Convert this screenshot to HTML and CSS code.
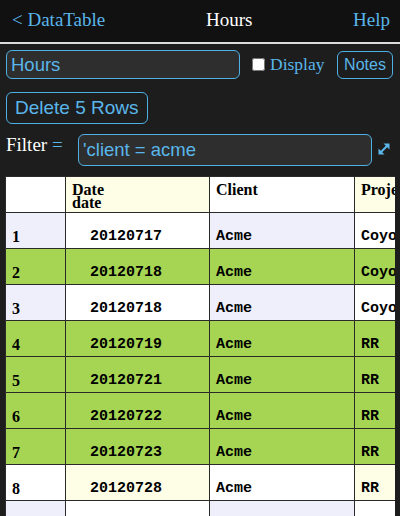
FILE: index.html
```html
<!DOCTYPE html>
<html>
<head>
<meta charset="utf-8">
<link rel="stylesheet" href="styles.css">
</head>
<body>
<header class="topbar">
  <span class="nav-link">&lt; DataTable</span>
  <span class="title">Hours</span>
  <span class="nav-link">Help</span>
</header>
<div class="toolbar">
  <input class="field name-field" type="text" value="Hours">
  <input class="check" type="checkbox">
  <span class="check-label">Display</span>
  <button class="btn notes-btn">Notes</button>
</div>
<div class="actions">
  <button class="btn delete-btn">Delete 5 Rows</button>
</div>
<div class="filter-row">
  <span class="filter-label">Filter <span class="eq">=</span></span>
  <input class="field filter-field" type="text" value="'client = acme">
  <svg class="expand" width="12" height="12" viewBox="0 0 12 12">
    <line x1="3" y1="9" x2="9" y2="3" stroke="#5ab6ea" stroke-width="2"/>
    <polygon points="5.5,0.5 11.5,0.5 11.5,6.5" fill="#5ab6ea"/>
    <polygon points="0.5,5.5 0.5,11.5 6.5,11.5" fill="#5ab6ea"/>
  </svg>
</div>
<div class="table-wrap">
  <table class="grid">
    <colgroup>
      <col class="c1"><col class="c2"><col class="c3"><col class="c4">
    </colgroup>
    <thead>
      <tr class="even">
        <th class="a"></th>
        <th class="b">Date<br>date</th>
        <th class="a">Client</th>
        <th class="b">Project</th>
      </tr>
    </thead>
    <tbody>
      <tr class="odd"><td class="a num">1</td><td class="b date">20120717</td><td class="a mono">Acme</td><td class="b mono">Coyote</td></tr>
      <tr class="sel"><td class="a num">2</td><td class="b date">20120718</td><td class="a mono">Acme</td><td class="b mono">Coyote</td></tr>
      <tr class="odd"><td class="a num">3</td><td class="b date">20120718</td><td class="a mono">Acme</td><td class="b mono">Coyote</td></tr>
      <tr class="sel"><td class="a num">4</td><td class="b date">20120719</td><td class="a mono">Acme</td><td class="b mono">RR</td></tr>
      <tr class="sel"><td class="a num">5</td><td class="b date">20120721</td><td class="a mono">Acme</td><td class="b mono">RR</td></tr>
      <tr class="sel"><td class="a num">6</td><td class="b date">20120722</td><td class="a mono">Acme</td><td class="b mono">RR</td></tr>
      <tr class="sel"><td class="a num">7</td><td class="b date">20120723</td><td class="a mono">Acme</td><td class="b mono">RR</td></tr>
      <tr class="even"><td class="a num">8</td><td class="b date">20120728</td><td class="a mono">Acme</td><td class="b mono">RR</td></tr>
      <tr class="odd"><td class="a num">9</td><td class="b date">20120729</td><td class="a mono">Acme</td><td class="b mono">RR</td></tr>
    </tbody>
  </table>
</div>
</body>
</html>
```
FILE: styles.css
```css
html, body {
  margin: 0;
  padding: 0;
  background: #1d1d1d;
  overflow: hidden;
}
body {
  width: 400px;
  height: 516px;
  font-family: "Liberation Serif", serif;
}
.topbar {
  display: flex;
  justify-content: space-between;
  align-items: flex-start;
  height: 33px;
  padding: 9px 10px 0 12px;
  background: #111111;
  border-bottom: 2px solid #dcdcdc;
  font-size: 19px;
  line-height: normal;
}
.nav-link { color: #5ab6ea; }
.title { color: #ffffff; }

.toolbar {
  display: flex;
  align-items: center;
  padding: 6px 7px 0 6px;
}
.field {
  box-sizing: border-box;
  background: #2e2e2e;
  border: 1px solid #4fb0e6;
  border-radius: 6px;
  color: #5ab6ea;
  font-family: "Liberation Sans", sans-serif;
  font-size: 18.5px;
  padding: 0 4px;
  margin: 0;
  outline: none;
}
.name-field {
  width: 234px;
  height: 29px;
}
.check {
  margin: 0 0 0 12px;
  width: 13px;
  height: 13px;
}
.check-label {
  margin-left: 5px;
  color: #5ab6ea;
  font-size: 17.5px;
}
.btn {
  box-sizing: border-box;
  background: transparent;
  border: 1px solid #4fb0e6;
  border-radius: 6px;
  color: #5ab6ea;
  font-family: "Liberation Sans", sans-serif;
  margin: 0;
  cursor: pointer;
}
.notes-btn {
  margin-left: auto;
  height: 28px;
  width: 56px;
  padding: 0;
  font-size: 16px;
}
.actions {
  padding: 13px 0 0 6px;
}
.delete-btn {
  height: 32px;
  padding: 0 8px;
  font-size: 19px;
}
.filter-row {
  display: flex;
  align-items: flex-start;
  padding: 10px 0 0 6px;
}
.filter-label {
  width: 72px;
  color: #ffffff;
  font-size: 19px;
  line-height: 21px;
}
.eq { color: #5ab6ea; }
.filter-field {
  width: 294px;
  height: 32px;
}
.expand {
  margin: 9px 0 0 6px;
}

.table-wrap {
  margin: 10px 5px 0 5px;
  overflow: hidden;
}
.grid {
  border-collapse: collapse;
  table-layout: fixed;
  width: 494px;
  border: 1px solid #222;
}
.c1 { width: 60px; }
.c2 { width: 144px; }
.c3 { width: 145px; }
.c4 { width: 145px; }
.grid tr { height: 36px; }
.grid th, .grid td {
  border: 1px solid #2a2a2a;
  padding: 0 6px;
  color: #000;
  white-space: nowrap;
  overflow: hidden;
  text-align: left;
}
.grid th {
  vertical-align: top;
  padding-top: 6px;
  font-size: 16px;
  line-height: 13px;
  font-weight: bold;
}
.grid td {
  vertical-align: bottom;
  padding-bottom: 2px;
  line-height: 18px;
}
.num {
  font-family: "Liberation Serif", serif;
  font-weight: bold;
  font-size: 16px;
}
.date, .mono {
  font-family: "Liberation Mono", monospace;
  font-weight: bold;
  font-size: 15px;
}
.grid td.date { padding-left: 24px; }

.even .a { background: #ffffff; }
.even .b { background: #fefde6; }
.odd .a { background: #efeffc; }
.odd .b { background: #ffffff; }
.sel .a, .sel .b { background: #a5d553; }
```
